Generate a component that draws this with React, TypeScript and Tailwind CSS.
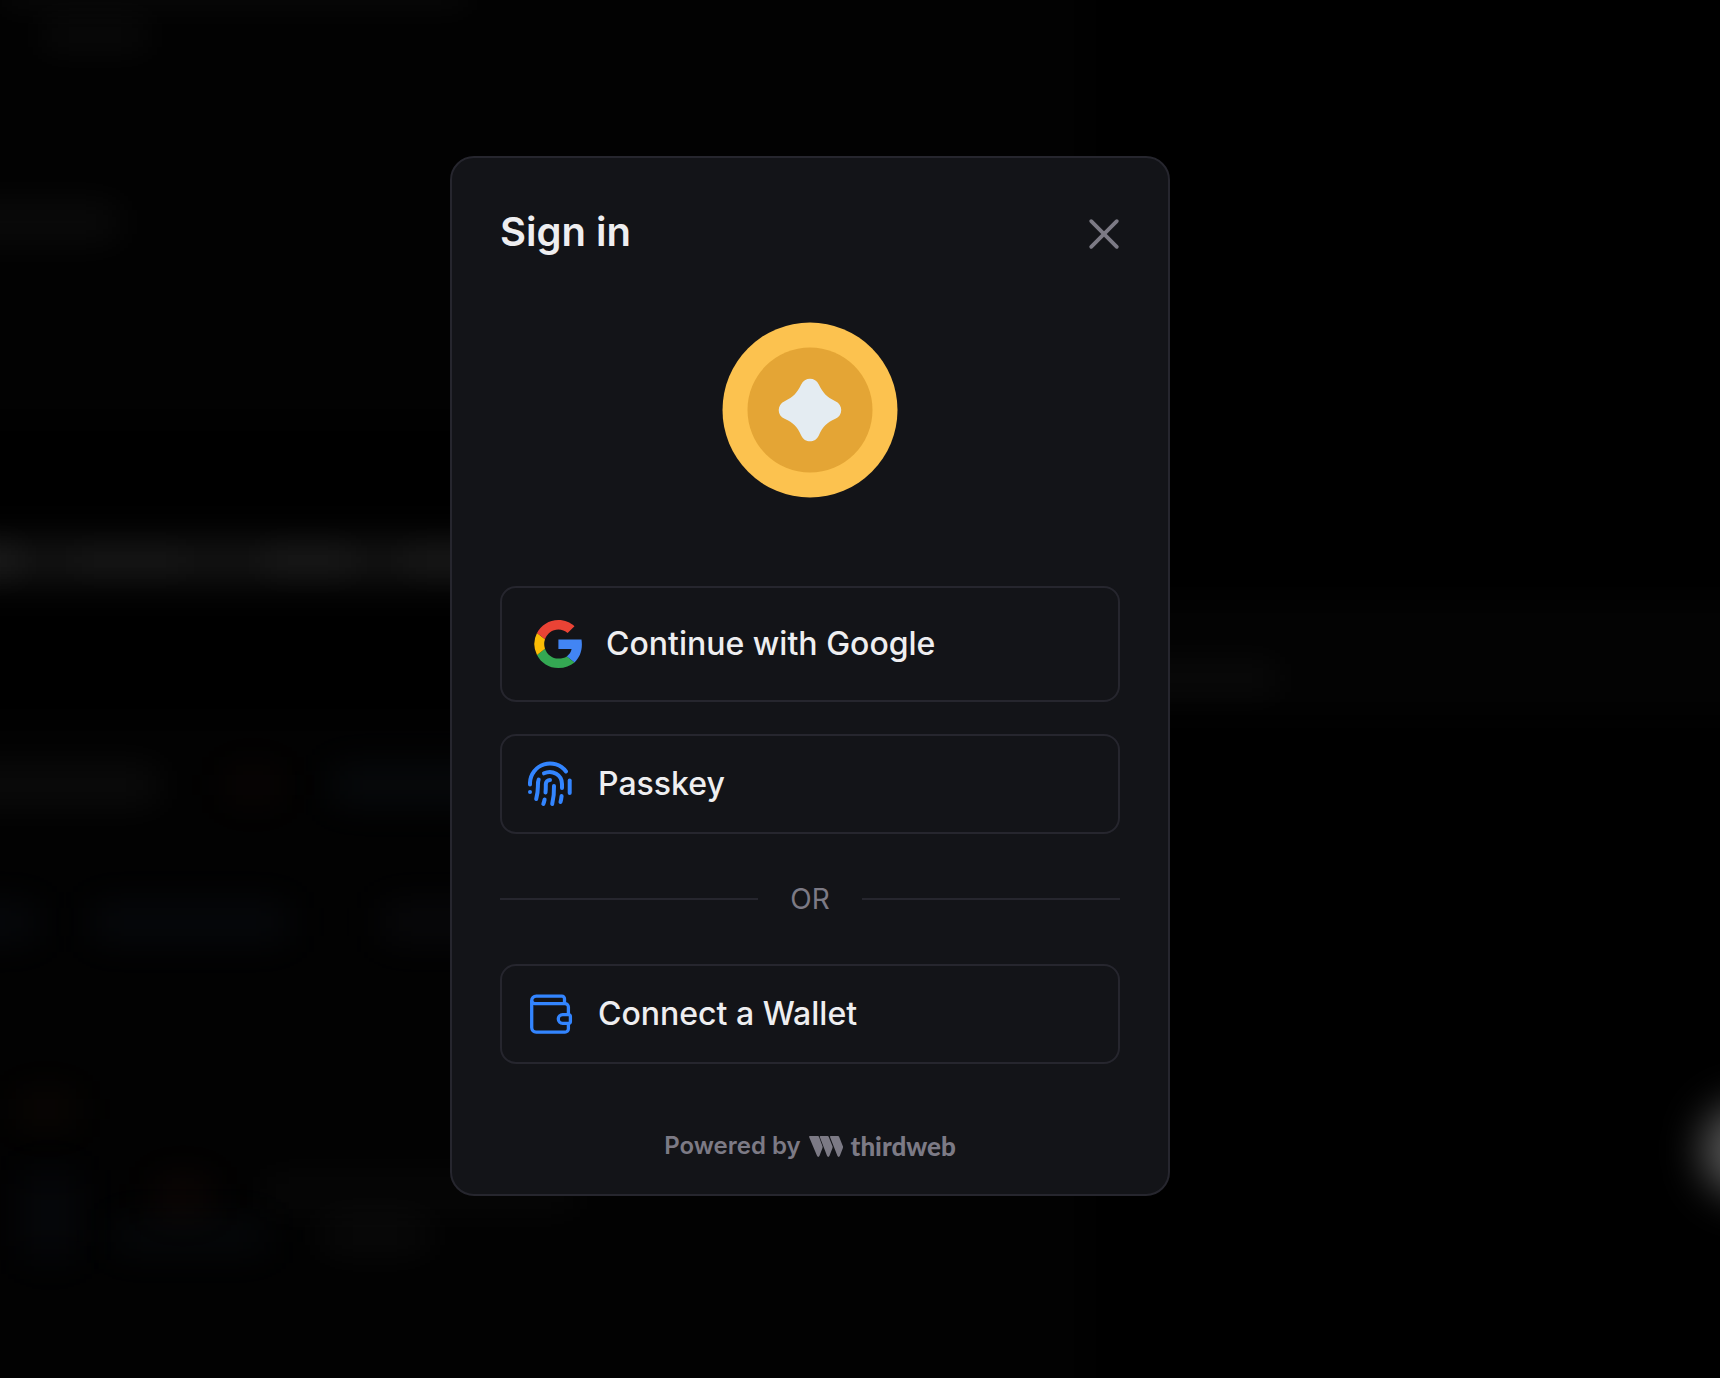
import React from "react";

type Glow = { key: string; className: string };

const glows: Glow[] = [
  { key: "panel", className: "left-[-40px] top-[-40px] h-[460px] w-[1125px] bg-[#020202] blur-[16px]" },
  { key: "panel-low", className: "left-[-40px] top-[720px] h-[720px] w-[1125px] bg-[#020202] blur-[16px]" },
  { key: "nav", className: "left-0 top-[-20px] h-[26px] w-[470px] bg-[#ffffff0a] blur-[18px]" },
  { key: "brand", className: "left-[40px] top-[20px] h-[30px] w-[110px] bg-[#ffffff0a] blur-[18px]" },
  { key: "crumb", className: "left-[-40px] top-[206px] h-[32px] w-[160px] bg-[#ffffff0d] blur-[20px]" },
  { key: "heading", className: "left-[-40px] top-[540px] h-[42px] w-[560px] bg-[#ffffff15] blur-[18px]" },
  { key: "heading-a", className: "left-[-30px] top-[544px] h-[32px] w-[50px] bg-[#ffffff0e] blur-[18px]" },
  { key: "heading-b", className: "left-[70px] top-[544px] h-[32px] w-[120px] bg-[#ffffff06] blur-[18px]" },
  { key: "heading-c", className: "left-[260px] top-[544px] h-[32px] w-[96px] bg-[#ffffff09] blur-[18px]" },
  { key: "heading-d", className: "left-[400px] top-[544px] h-[32px] w-[120px] bg-[#ffffff08] blur-[18px]" },
  { key: "row-a", className: "left-[-40px] top-[768px] h-[34px] w-[200px] bg-[#ffffff0d] blur-[20px]" },
  { key: "row-b", className: "left-[225px] top-[770px] h-[30px] w-[56px] bg-[#ff70500c] blur-[20px]" },
  { key: "row-c", className: "left-[330px] top-[768px] h-[34px] w-[160px] bg-[#90c0ff0e] blur-[20px]" },
  { key: "row-d", className: "left-[-40px] top-[905px] h-[34px] w-[80px] bg-[#80b8ff0d] blur-[20px]" },
  { key: "row-e", className: "left-[90px] top-[905px] h-[34px] w-[200px] bg-[#80b8ff0d] blur-[20px]" },
  { key: "row-f", className: "left-[380px] top-[905px] h-[34px] w-[120px] bg-[#c8c8ff0c] blur-[20px]" },
  { key: "row-g", className: "left-[16px] top-[1094px] h-[30px] w-[60px] bg-[#ff90400d] blur-[20px]" },
  { key: "row-h", className: "left-[20px] top-[1170px] h-[90px] w-[60px] bg-[#80b8ff09] blur-[20px]" },
  { key: "row-i", className: "left-[155px] top-[1180px] h-[32px] w-[56px] bg-[#ff705010] blur-[20px]" },
  { key: "row-j", className: "left-[110px] top-[1222px] h-[28px] w-[160px] bg-[#80b8ff0c] blur-[20px]" },
  { key: "row-k", className: "left-[320px] top-[1220px] h-[30px] w-[110px] bg-[#ffffff0b] blur-[20px]" },
  { key: "row-l", className: "left-[260px] top-[1175px] h-[36px] w-[320px] bg-[#ffffff07] blur-[20px]" },
  { key: "band", className: "right-[-40px] top-[600px] h-[115px] w-[640px] bg-[#030303] blur-[14px]" },
  { key: "band-text", className: "left-[1120px] top-[662px] h-[32px] w-[160px] bg-[#ffffff09] blur-[18px]" },
  { key: "fab", className: "right-[-76px] top-[1103px] h-[94px] w-[94px] rounded-full bg-[#585858] blur-[20px]" },
];

function Backdrop() {
  return (
    <div aria-hidden="true" className="absolute inset-0 overflow-hidden">
      {glows.map((g) => (
        <div key={g.key} className={`absolute ${g.className}`} />
      ))}
    </div>
  );
}

function CloseIcon() {
  return (
    <svg viewBox="0 0 32 32" className="size-8" fill="none" stroke="currentColor" strokeWidth="3.8" strokeLinecap="round" aria-hidden="true">
      <path d="M3.200 3.200 28.800 28.800M28.800 3.200 3.200 28.800" />
    </svg>
  );
}

function CoinLogo() {
  return (
    <svg viewBox="0 0 176 176" className="size-44" role="img" aria-label="App logo">
      <circle cx="88" cy="88" r="87.5" fill="#fcc24f" />
      <circle cx="88" cy="88" r="62.5" fill="#e4a535" />
      <path
        fill="#e4ecf2"
        d="M79.2 62.600C82.500 54.800 93.500 54.800 96.800 62.600C101 71 104.500 75 113.400 79.200C121.200 82.500 121.200 93.500 113.400 96.800C104.500 101 101 104.500 96.800 113.400C93.500 121.200 82.500 121.200 79.200 113.400C75 104.500 71.500 101 62.600 96.800C54.800 93.500 54.800 82.500 62.600 79.200C71.500 75 75 71 79.200 62.600Z"
      />
    </svg>
  );
}

function GoogleIcon() {
  return (
    <svg viewBox="0 0 48 48" className="size-12 shrink-0" aria-hidden="true">
      <path fill="#4285f4" d="M47.900 24.500c0-1.600-.200-3.200-.400-4.900H24.400v9.500h13.200c-.600 3-2.300 5.600-4.800 7.300l7.700 6c4.600-4.200 7.400-10.500 7.400-17.900Z" />
      <path fill="#34a853" d="M24.400 48c6.500 0 11.900-2.100 16.100-5.600l-7.700-6c-2.200 1.400-4.900 2.200-8.400 2.200-6.200 0-11.500-4.200-13.400-9.900l-8 6.200C7 42.800 15 48 24.400 48Z" />
      <path fill="#fbbc05" d="M11 28.700a14.500 14.500 0 0 1 0-9.400l-8-6.200a24 24 0 0 0 0 21.800l8-6.200Z" />
      <path fill="#ea4335" d="M24.400 9.500c3.500 0 6.700 1.200 9.200 3.600l6.900-6.900C36.300 2.400 30.900 0 24.400 0 15 0 7 5.400 3 13.100l8 6.200C12.900 13.700 18.200 9.500 24.400 9.500Z" />
    </svg>
  );
}

function FingerprintIcon() {
  return (
    <svg viewBox="0 0 56 56" className="size-14 shrink-0" fill="none" stroke="#3385ff" strokeWidth="4" strokeLinecap="round" strokeLinejoin="round" aria-hidden="true">
      <path d="M8 28.500v-2a20 20 0 0 1 36-11" />
      <path d="M8 36v.1" />
      <path d="M47.700 24.500v12.500" />
      <path d="M22 17.300c8.500-4 18 1.700 18 10.700v4" />
      <path d="M16.700 23.500c-.900 2-.800 4-.800 7 0 4-.500 8-1.700 12.500" />
      <path d="M23.500 36.500c.400-3 .300-5.500.300-8.500 0-2.200 1.800-4 4.200-4" />
      <path d="M32 30c.200 6-.400 12-1.800 18" />
      <path d="M22.600 43.500c-.300 1.500-.700 3-1.300 4.500" />
      <path d="M39.600 40c-.200 2-.500 4-1.100 6" />
    </svg>
  );
}

function WalletIcon() {
  return (
    <svg viewBox="0 0 56 56" className="size-14 shrink-0" fill="none" stroke="#3385ff" strokeWidth="3.300" strokeLinejoin="round" aria-hidden="true">
      <path d="M42.500 17.700v-5a2.600 2.600 0 0 0-2.600-2.600H14.200a4.500 4.500 0 0 0-4.500 4.500c0 1.700 1.400 3.100 3.100 3.100h30.200a3.400 3.400 0 0 1 3.400 3.400v7.800" />
      <path d="M9.700 14.600v27a4.500 4.500 0 0 0 4.500 4.500h28.800a3.400 3.400 0 0 0 3.400-3.400v-5.400" />
      <path d="M40.600 28.700h6a1.800 1.800 0 0 1 1.800 1.800v5a1.800 1.800 0 0 1-1.800 1.800h-6a4.300 4.300 0 0 1 0-8.600Z" />
    </svg>
  );
}

function ThirdwebMark() {
  return (
    <svg viewBox="0 0 34 21" className="h-[21px] w-[34px]" fill="currentColor" aria-hidden="true">
      <path d="M.700 0h8.200c.500 0 .900.300 1.100.800l3.400 9.200c.300.700.300 1.500 0 2.200l-3 7.900c-.400 1.100-1.900 1.100-2.300 0L.200 1.200C0 .600.100 0 .700 0Z" />
      <path d="M11.400 0h7.200c.500 0 .900.300 1.100.800l3.700 9.200c.300.700.300 1.500 0 2.200l-3 7.900c-.400 1.100-1.900 1.100-2.300 0L10.900 1.200C10.700.600 10.800 0 11.400 0Z" />
      <path d="M21.600 0h7.400c.500 0 .900.300 1.100.800l3.700 9.200c.300.700.300 1.500 0 2.200l-3 7.900c-.400 1.100-1.900 1.100-2.300 0L21.100 1.200C20.900.600 21 0 21.600 0Z" />
    </svg>
  );
}

function OptionButton({ icon, label }: { icon: React.ReactNode; label: string }) {
  return (
    <button
      type="button"
      className="flex w-full cursor-pointer items-center gap-5 rounded-2xl border-2 border-[#26262e] p-5 text-left text-[32px] leading-10 font-medium text-[#eeeef0]"
    >
      {icon}
      <span>{label}</span>
    </button>
  );
}

export default function App() {
  return (
    <div className="relative min-h-screen overflow-hidden bg-black font-['Inter',sans-serif] antialiased">
      <Backdrop />
      <main className="relative flex min-h-screen items-center justify-center pr-[100px] pb-[26px]">
        <section
          role="dialog"
          aria-labelledby="sign-in-title"
          className="w-full max-w-[720px] rounded-3xl border-2 border-[#26262e] bg-[#131418] px-12 pt-12 pb-[30px]"
        >
          <header className="flex items-center justify-between">
            <h1 id="sign-in-title" className="text-[40px] leading-[52px] font-semibold text-[#eeeef0]">
              Sign in
            </h1>
            <button type="button" aria-label="Close" className="cursor-pointer pt-1 text-[#7c7a85]">
              <CloseIcon />
            </button>
          </header>

          <div className="flex justify-center pt-16 pb-[88px]">
            <CoinLogo />
          </div>

          <div className="flex flex-col gap-8">
            <button
              type="button"
              className="flex w-full cursor-pointer items-center gap-6 rounded-2xl border-2 border-[#26262e] p-8 text-left text-[32px] leading-10 font-medium text-[#eeeef0]"
            >
              <GoogleIcon />
              <span>Continue with Google</span>
            </button>
            <OptionButton icon={<FingerprintIcon />} label="Passkey" />
          </div>

          <div className="flex items-center gap-8 py-11 text-[28px] leading-[42px] text-[#7c7a85]">
            <span className="h-0.5 flex-1 bg-[#26262e]" />
            <span>OR</span>
            <span className="h-0.5 flex-1 bg-[#26262e]" />
          </div>

          <OptionButton icon={<WalletIcon />} label="Connect a Wallet" />

          <footer className="mt-16 flex justify-center">
            <a href="#thirdweb" className="flex items-center gap-2 text-2xl leading-9 font-semibold text-[#7c7a85]">
              <span>Powered by</span>
              <ThirdwebMark />
              <span className="font-['Lato',sans-serif] text-[26px] font-black">thirdweb</span>
            </a>
          </footer>
        </section>
      </main>
    </div>
  );
}
